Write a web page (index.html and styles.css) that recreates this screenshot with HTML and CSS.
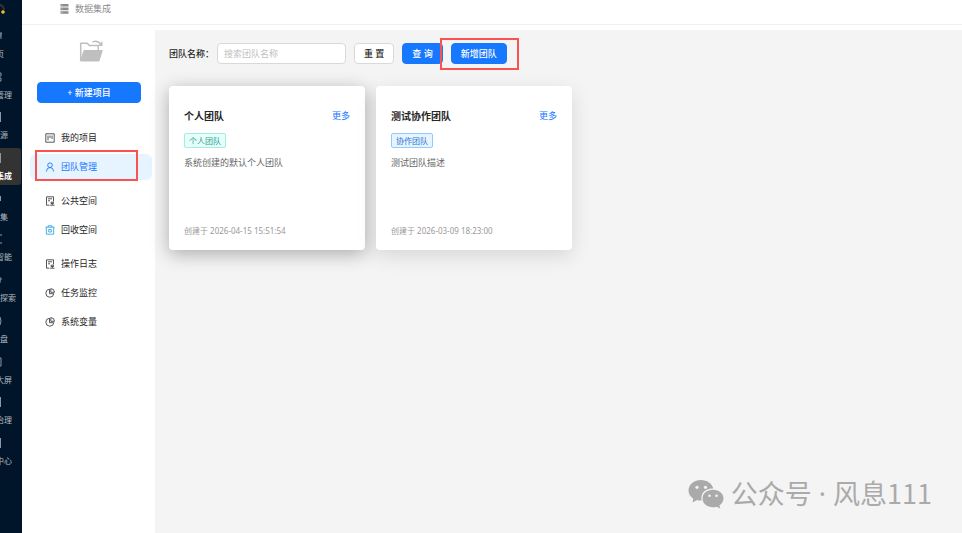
FILE: index.html
```html
<!DOCTYPE html>
<html lang="zh-CN">
<head>
<meta charset="utf-8">
<title>数据集成</title>
<link rel="stylesheet" href="styles.css">
</head>
<body>
<svg class="defs" aria-hidden="true">
  <symbol id="note" viewBox="0 0 10 10"><path d="M4.500 9.200H1.500V.8h7v4.700M3 2.800h4M3 4.800h2M5.200 9.200h4.300M7.300 9V7.500M6 6.200h2.500v1.300H6z" /></symbol>
  <symbol id="pie" viewBox="0 0 10 10"><path d="M4.500 1.200a4 4 0 1 0 4.300 4.500H4.500zM5.800.6v3.700h3.700A3.800 3.800 0 0 0 5.800.6z" /></symbol>
</svg>
<div class="app">
  <nav class="rail">
    <svg class="brand" viewBox="0 0 22 20"><path d="M0 5q3 0 4 5" fill="none" stroke="#333" stroke-width="2"/><circle cx="3" cy="12" r="1.800" fill="#fdb931"/></svg>
    <ul class="rail-list">
      <li class="rail-item two"><svg viewBox="0 0 4 10"><path d="M0 3h2M0 5h1M1 1v7"/></svg><a href="#">页</a></li>
      <li class="rail-item"><svg viewBox="0 0 4 10"><path d="M0 1h1v3H0M0 6h1v3H0"/></svg><a href="#">管理</a></li>
      <li class="rail-item three"><svg viewBox="0 0 4 10"><path d="M.5 0v10"/></svg><a href="#">源</a></li>
      <li class="rail-item active"><svg viewBox="0 0 4 10"><path d="M.5 0v10M0 3h1M0 7h1"/></svg><a href="#">集成</a></li>
      <li class="rail-item three"><svg viewBox="0 0 4 10"><path d="M.5 2v5"/></svg><a href="#">集</a></li>
      <li class="rail-item"><svg viewBox="0 0 4 10"><path d="M0 1h2M0 9h2"/></svg><a href="#">智能</a></li>
      <li class="rail-item five"><svg viewBox="0 0 4 10"><path d="M0 3h1v2H0M0 8V5"/></svg><a href="#">探索</a></li>
      <li class="rail-item three"><svg viewBox="0 0 4 10"><path d="M0 1q2 4 0 8"/></svg><a href="#">盘</a></li>
      <li class="rail-item"><svg viewBox="0 0 4 10"><path d="M0 1h1v8H0"/></svg><a href="#">大屏</a></li>
      <li class="rail-item"><svg viewBox="0 0 4 10"><path d="M.5 0v10"/></svg><a href="#">治理</a></li>
      <li class="rail-item"><svg viewBox="0 0 4 10"><path d="M.5 0v10"/></svg><a href="#">中心</a></li>
    </ul>
  </nav>
  <div class="page">
    <header class="topbar">
      <svg viewBox="0 0 9 10"><path d="M.5 0h8v2.600h-8zM.5 3.600h8v2.600h-8zM.5 7.200h8v2.600h-8z" fill="#8c8c8c"/><path d="M1.500 1.300h1M1.500 4.900h1M1.500 8.500h1" stroke="#ddd" stroke-width=".7"/></svg>
      <span>数据集成</span>
    </header>
    <div class="body">
      <aside class="side">
        <svg class="folder" viewBox="0 0 24 22"><path d="M1.700 20V3.200h6.600l2 2.400h9v4.400" fill="none" stroke="#bfbfbf" stroke-width="1.500" stroke-linejoin="round"/><path d="M5 10.500h18.200L20 21H1.500z" fill="#bfbfbf" stroke="#bfbfbf" stroke-linejoin="round"/><path d="M13.500 2q5-2.200 8.500 2.500M22.800 1.800v3.500h-3" fill="none" stroke="#bfbfbf" stroke-width="1.400"/></svg>
        <button class="btn primary create" type="button">+ 新建项目</button>
        <ul class="menu">
          <li><a href="#"><svg viewBox="0 0 10 10"><path d="M.8.8h8.400v8.400H.8zM3 2.500v4.800M5 2.500v2.500M7 2.500v3.500"/></svg>我的项目</a></li>
          <li class="current"><a href="#"><svg viewBox="0 0 10 10"><circle cx="5" cy="3.200" r="2.300"/><path d="M1.300 9.500q.4-4 3.700-4t3.700 4"/></svg>团队管理</a></li>
          <li class="group"><a href="#"><svg viewBox="0 0 10 10"><use href="#note"/></svg>公共空间</a></li>
          <li><a href="#"><svg class="bin" viewBox="0 0 10 10"><path d="M.5 2.200h9M3 2.200V.8h4v1.400M1.300 2.200v7h7.400v-7M3.700 4.500v2.500h2.600V4.500z"/></svg>回收空间</a></li>
          <li class="group"><a href="#"><svg viewBox="0 0 10 10"><use href="#note"/></svg>操作日志</a></li>
          <li><a href="#"><svg viewBox="0 0 10 10"><use href="#pie"/></svg>任务监控</a></li>
          <li><a href="#"><svg viewBox="0 0 10 10"><use href="#pie"/></svg>系统变量</a></li>
        </ul>
      </aside>
      <main class="main">
        <form class="filters">
          <label for="team">团队名称：</label>
          <input id="team" type="text" placeholder="搜索团队名称">
          <button class="btn" type="button">重 置</button>
          <button class="btn primary" type="button">查 询</button>
          <span class="marked"><button class="btn primary" type="button">新增团队</button></span>
        </form>
        <div class="cards">
          <article class="card raised">
            <div class="card-head"><h2>个人团队</h2><a href="#">更多</a></div>
            <span class="tag cyan">个人团队</span>
            <p>系统创建的默认个人团队</p>
            <time>创建于 2026-04-15 15:51:54</time>
          </article>
          <article class="card">
            <div class="card-head"><h2>测试协作团队</h2><a href="#">更多</a></div>
            <span class="tag blue">协作团队</span>
            <p>测试团队描述</p>
            <time>创建于 2026-03-09 18:23:00</time>
          </article>
        </div>
        <div class="watermark">
          <svg viewBox="0 0 36 30"><path d="M13 1C6 1 .5 5.500.500 11.500c0 3.500 2 6.300 4.800 8.200L4.500 23.500l4.600-2.400q2 .6 4.500.5C12 14 18 9 25.300 9.500 24 4.500 19 1 13 1z" fill="#aaa"/><path d="M25 10.700c-6 0-10.500 3.900-10.500 8.800s4.500 8.700 10.500 8.700q2 0 3.700-.5l3.600 1.900-.9-3.200c2.600-1.700 4.100-4.100 4.100-6.900 0-4.900-4.500-8.800-10.500-8.800z" fill="#aaa"/><g fill="#f4f4f4"><circle cx="9" cy="8.300" r="1.600"/><circle cx="17.500" cy="8.300" r="1.600"/><circle cx="21.500" cy="16.700" r="1.300"/><circle cx="28.500" cy="16.700" r="1.300"/></g></svg>
          <span>公众号<span class="dot"> · </span>风息111</span>
        </div>
      </main>
    </div>
  </div>
</div>
</body>
</html>
```
FILE: styles.css
```css
* {
  box-sizing: border-box;
}

body {
  margin: 0;
  font-family: "Noto Sans", "Noto Sans CJK SC", sans-serif;
  font-size: 9px;
  line-height: 14px;
  color: #262626;
  background: #fff;
}

ul {
  list-style: none;
  margin: 0;
  padding: 0;
}

a {
  color: inherit;
  text-decoration: none;
}

.defs {
  position: absolute;
  width: 0;
  height: 0;
}

.app {
  display: flex;
  min-height: 100vh;
}

/* Dark navigation rail */
.rail {
  flex: none;
  width: 22px;
  overflow: hidden;
  background: #001529;
  color: #b3bac1;
  font-size: 8px;
}

.brand {
  display: block;
  width: 22px;
  height: 20px;
  margin-bottom: 6px;
}

.rail-list {
  display: flex;
  flex-direction: column;
  justify-content: space-between;
  height: 444px;
}

.rail-item {
  display: flex;
  flex-direction: column;
  align-items: flex-end;
  gap: 6px;
  height: 37px;
  margin-right: 1px;
  padding: 5px 9px 0 0;
  white-space: nowrap;
}

.rail-item svg {
  align-self: flex-start;
  width: 4px;
  height: 10px;
  fill: none;
  stroke: #8d98a3;
}

.rail-item.two {
  padding-right: 17px;
}

.rail-item.three {
  padding-right: 13px;
}

.rail-item.five {
  padding-right: 5px;
}

.rail-item.active {
  color: #fff;
  font-weight: 700;
  background: #333;
  border-radius: 0 3px 3px 0;
}

.page {
  flex: 1;
  min-width: 0;
  display: flex;
  flex-direction: column;
}

.topbar {
  display: flex;
  align-items: center;
  gap: 6px;
  height: 25px;
  padding: 0 38px 6px;
  border-bottom: 1px solid #f0f0f0;
  color: #8c8c8c;
}

.topbar svg {
  width: 9px;
  height: 10px;
}

.body {
  flex: 1;
  display: flex;
  padding-top: 5px;
}

/* Project sidebar */
.side {
  flex: none;
  width: 133px;
  padding: 10px 3px 0 8px;
}

.folder {
  display: block;
  width: 24px;
  height: 22px;
  margin: 0 auto 20px 49px;
}

.btn {
  height: 21px;
  padding: 0 9px;
  border: 1px solid #d9d9d9;
  border-radius: 4px;
  background: #fff;
  color: #262626;
  font: inherit;
  font-weight: 500;
  white-space: nowrap;
}

.btn.primary {
  border-color: #1677ff;
  background: #1677ff;
  color: #fff;
}

.create {
  display: block;
  width: 104px;
  margin: 0 7px 22px;
}

.menu {
  display: flex;
  flex-direction: column;
  gap: 3px;
}

.menu li {
  position: relative;
  border-radius: 6px;
}

.menu a {
  display: flex;
  align-items: center;
  gap: 6px;
  height: 26px;
  padding-left: 15px;
}

.menu svg {
  width: 10px;
  height: 10px;
  fill: none;
  stroke: #444;
  stroke-width: 0.9;
}

.menu .bin {
  stroke: #36a9e1;
}

.menu .group {
  margin-top: 5px;
}

.menu .current {
  background: #e6f4ff;
  color: #1677ff;
}

.menu .current svg {
  stroke: #1677ff;
}

.menu .current::after,
.marked::after {
  content: "";
  position: absolute;
  border: 2px solid #fa5151;
  pointer-events: none;
}

.menu .current::after {
  inset: -4px 14px -1px 5px;
}

/* Team list */
.main {
  position: relative;
  flex: 1;
  padding: 13px 14px;
  background: #f4f4f4;
}

.filters {
  display: flex;
  align-items: center;
  gap: 8px;
  margin-bottom: 22px;
}

.filters label {
  width: 40px;
  white-space: nowrap;
  font-weight: 500;
}

.filters input {
  width: 129px;
  height: 21px;
  padding: 0 6px;
  border: 1px solid #d9d9d9;
  border-radius: 4px;
  background: #fff;
  font: inherit;
}

.filters input::placeholder {
  color: #bfbfbf;
}

.marked {
  position: relative;
  display: flex;
}

.marked::after {
  inset: -5px -12px -6px -11px;
}

.cards {
  display: flex;
  flex-wrap: wrap;
  gap: 11px;
}

.card {
  display: flex;
  flex-direction: column;
  align-items: flex-start;
  width: 196px;
  min-height: 164px;
  padding: 23px 15px 12px;
  border-radius: 4px;
  background: #fff;
  box-shadow: 0 6px 20px rgba(0, 0, 0, 0.12);
}

.card.raised {
  box-shadow: 0 4px 18px rgba(0, 0, 0, 0.3);
}

.card-head {
  display: flex;
  align-self: stretch;
  justify-content: space-between;
  align-items: center;
  margin-bottom: 10px;
}

.card-head h2 {
  margin: 0;
  font-size: 10px;
  line-height: 14px;
}

.card-head a {
  color: #1677ff;
}

.tag {
  padding: 0 4px;
  border: 1px solid;
  border-radius: 2px;
  font-size: 8px;
  line-height: 13px;
}

.cyan {
  color: #2a9d8f;
  background: #e6fffb;
  border-color: #a3ece0;
}

.blue {
  color: #2f74d0;
  background: #e6f4ff;
  border-color: #91caff;
}

.card p {
  margin: 8px 0 0;
  color: #666;
}

.card time {
  margin-top: auto;
  color: #999;
  font-size: 8px;
}

.watermark {
  position: absolute;
  right: 30px;
  bottom: 19px;
  display: flex;
  align-items: center;
  gap: 7px;
  color: #aaa;
  font-family: "Noto Sans CJK SC", sans-serif;
  font-size: 27px;
  line-height: 40px;
}

.watermark .dot {
  font-family: "Noto Sans", sans-serif;
}

.watermark svg {
  width: 36px;
  height: 30px;
}
```
